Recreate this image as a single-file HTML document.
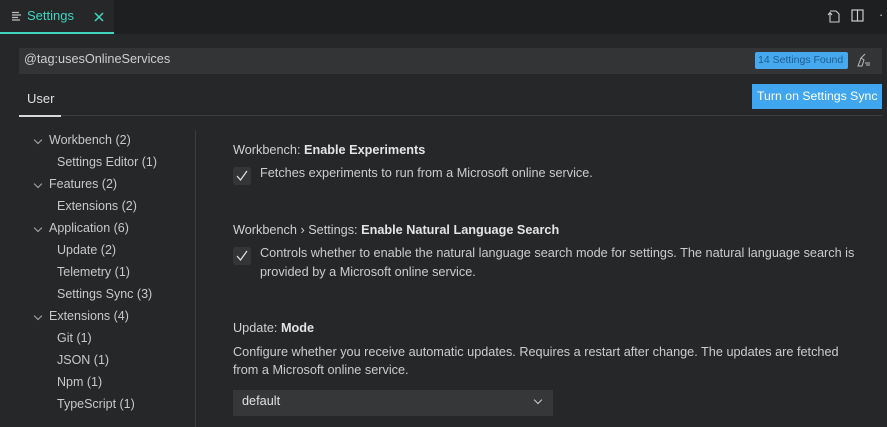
<!DOCTYPE html>
<html><head><style>
*{margin:0;padding:0;box-sizing:border-box}
body{width:887px;height:427px;background:#262729;font-family:"Liberation Sans",sans-serif;font-size:12.7px;color:#cccccc;position:relative;overflow:hidden}
.abs{position:absolute;white-space:nowrap}
.tabbar{position:absolute;left:0;top:0;width:887px;height:34px;background:#1e1f21}
.tab{position:absolute;left:0;top:0;width:114px;height:34px;background:#262729;border-bottom:2px solid #3fd6c0}
.search{position:absolute;left:19px;top:48px;width:863px;height:26px;background:#333436}
.tree div{position:absolute;white-space:nowrap;color:#c8c8c8;font-size:12.5px}
.chev{position:absolute;width:6px;height:6px;border-right:1.3px solid #aaa;border-bottom:1.3px solid #aaa;transform:rotate(45deg)}
.title{color:#d0d0d0}
.title b{font-weight:bold;color:#e4e4e4}
.cb{position:absolute;width:18px;height:18px;background:#343537;border-radius:3px}
</style></head><body>
<div class="tabbar"></div>
<div class="tab"></div>
<svg class="abs" style="left:12px;top:11px" width="10" height="10"><path d="M0 1.5h7M0 4h9M0 6.5h6M0 9h8" stroke="#bbb" stroke-width="1.2"/></svg>
<div class="abs" style="left:27px;top:8px;color:#3fd6c0;font-size:13px">Settings</div>
<svg class="abs" style="left:94px;top:12px" width="10" height="10"><path d="M1 1L9 9M9 1L1 9" stroke="#3fd6c0" stroke-width="1.5"/></svg>
<svg class="abs" style="left:825px;top:8px" width="16" height="16"><path d="M5 3h6l3 3v8H5V9M3 7l2-2.5 2 2.5M5 4.5V9" stroke="#ccc" fill="none" stroke-width="1.1"/></svg>
<svg class="abs" style="left:851px;top:9px" width="14" height="14"><rect x="1" y="1" width="11" height="11" stroke="#ccc" fill="none" stroke-width="1.2"/><path d="M6.5 1v11" stroke="#ccc" stroke-width="1.2"/></svg>
<div class="abs" style="left:879px;top:8px;color:#ccc">·</div>
<div class="search"></div>
<div class="abs" style="left:24px;top:52px;color:#cfcfcf">@tag:usesOnlineServices</div>
<div class="abs" style="left:755px;top:52px;width:93px;height:17px;background:#46a9f0;border-radius:2px;color:#1e5c8a;font-size:10.5px;padding:2px 0 0 3px">14 Settings Found</div>
<svg class="abs" style="left:856px;top:53px" width="16" height="16"><path d="M2 13l3-8 3 2-2 6zM5 5l4-4M9 10h5M10 12h4M3 13h3" stroke="#bbb" fill="none" stroke-width="1"/></svg>
<div class="abs" style="left:27px;top:91px;color:#e0e0e0;font-size:13px">User</div>
<div class="abs" style="left:19px;top:115px;width:863px;height:1px;background:#3c3d3f"></div>
<div class="abs" style="left:19px;top:115px;width:42px;height:2px;background:#d8d8d8"></div>
<div class="abs" style="left:752px;top:84px;width:130px;height:25px;background:#3fa6ef;color:#fff;font-size:12.3px;padding:5px 0 0 5px;overflow:hidden">Turn on Settings Sync</div>
<div class="abs" style="left:195px;top:130px;width:1px;height:297px;background:#3c3d3f"></div>
<div class="tree">
<span class="chev" style="left:35px;top:137px"></span><div style="left:49px;top:133px">Workbench (2)</div>
<div style="left:57px;top:155px">Settings Editor (1)</div>
<span class="chev" style="left:35px;top:181px"></span><div style="left:49px;top:177px">Features (2)</div>
<div style="left:57px;top:199px">Extensions (2)</div>
<span class="chev" style="left:35px;top:225px"></span><div style="left:49px;top:221px">Application (6)</div>
<div style="left:57px;top:243px">Update (2)</div>
<div style="left:57px;top:265px">Telemetry (1)</div>
<div style="left:57px;top:287px">Settings Sync (3)</div>
<span class="chev" style="left:35px;top:313px"></span><div style="left:49px;top:309px">Extensions (4)</div>
<div style="left:57px;top:331px">Git (1)</div>
<div style="left:57px;top:353px">JSON (1)</div>
<div style="left:57px;top:375px">Npm (1)</div>
<div style="left:57px;top:397px">TypeScript (1)</div>
</div>
<div class="abs title" style="left:233px;top:143px">Workbench: <b>Enable Experiments</b></div>
<div class="cb" style="left:233px;top:167px"></div>
<svg class="abs" style="left:235px;top:169px" width="14" height="14"><path d="M2 7l3.5 4L12 2" stroke="#ddd" fill="none" stroke-width="1.3"/></svg>
<div class="abs" style="left:260px;top:166px">Fetches experiments to run from a Microsoft online service.</div>
<div class="abs title" style="left:233px;top:223px">Workbench › Settings: <b>Enable Natural Language Search</b></div>
<div class="cb" style="left:233px;top:247px"></div>
<svg class="abs" style="left:235px;top:249px" width="14" height="14"><path d="M2 7l3.5 4L12 2" stroke="#ddd" fill="none" stroke-width="1.3"/></svg>
<div class="abs" style="left:260px;top:246px">Controls whether to enable the natural language search mode for settings. The natural language search is</div>
<div class="abs" style="left:260px;top:265px">provided by a Microsoft online service.</div>
<div class="abs title" style="left:233px;top:321px">Update: <b>Mode</b></div>
<div class="abs" style="left:233px;top:345px">Configure whether you receive automatic updates. Requires a restart after change. The updates are fetched</div>
<div class="abs" style="left:233px;top:363px">from a Microsoft online service.</div>
<div class="abs" style="left:233px;top:390px;width:320px;height:26px;background:#363739"></div>
<div class="abs" style="left:242px;top:394px;color:#e0e0e0">default</div>
<span class="chev" style="left:535px;top:397px;border-color:#ccc"></span>
</body></html>
